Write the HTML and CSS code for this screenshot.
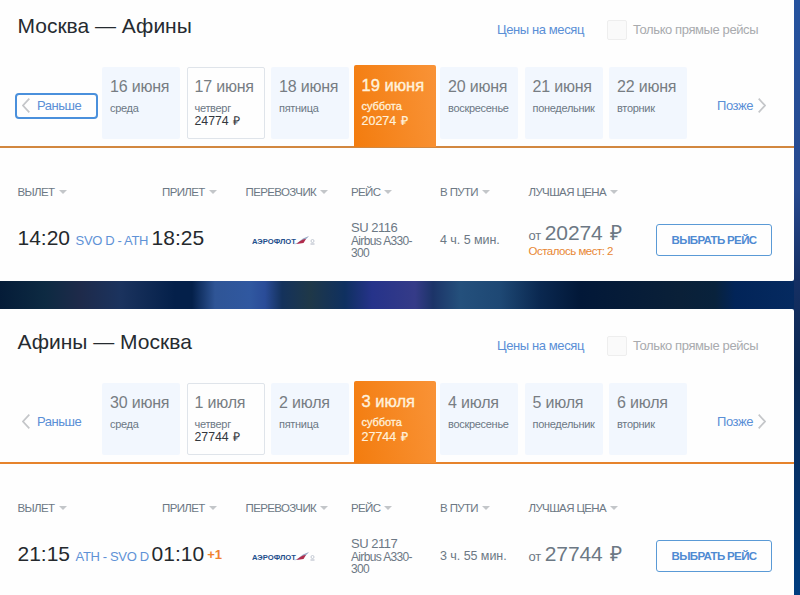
FILE: index.html
```html
<!DOCTYPE html>
<html lang="ru">
<head>
    <meta charset="UTF-8">
    <title>Выбор рейса</title>
    <link rel="stylesheet" href="styles.css">
</head>
<body>

<!-- логотип перевозчика -->
<svg width="0" height="0" class="sprite">
    <symbol id="aeroflot" viewBox="0 0 64 12">
        <text x="0" y="8.6" class="logo-text" textLength="44" lengthAdjust="spacingAndGlyphs">АЭРОФЛОТ</text>
        <path d="M42 9.300 C48 8.500 53 6 57 1 L51 3.600 L46 7.500 Z" fill="#97a5c2"/>
        <path d="M44.500 9 C47 6.500 50 4.300 54 4 L51.500 8 Z" fill="#b02c4c"/>
        <circle cx="60.500" cy="6" r="1.500" fill="none" stroke="#c3c9d3" stroke-width="1"/>
        <path d="M58.500 9 h4" stroke="#c8cdd6" stroke-width="1.500"/>
    </symbol>
</svg>

<section class="card">
    <header class="card-header">
        <h2>Москва — Афины</h2>
        <a class="month-link">Цены на месяц</a>
        <label class="direct"><span class="checkbox"></span>Только прямые рейсы</label>
    </header>

    <div class="dates">
        <a class="earlier focused"><svg class="arrow" viewBox="0 0 8 15"><path d="M7.300 0.700 L1 7.500 L7.300 14.300"/></svg>Раньше</a>
        <div class="days">
            <div class="day"><b>16 июня</b><span>среда</span></div>
            <div class="day priced"><b>17 июня</b><span>четверг</span><em>24774 ₽</em></div>
            <div class="day"><b>18 июня</b><span>пятница</span></div>
            <div class="day active"><b>19 июня</b><span>суббота</span><em>20274 ₽</em></div>
            <div class="day"><b>20 июня</b><span>воскресенье</span></div>
            <div class="day"><b>21 июня</b><span>понедельник</span></div>
            <div class="day"><b>22 июня</b><span>вторник</span></div>
        </div>
        <a class="later">Позже<svg class="arrow" viewBox="0 0 8 15"><path d="M0.700 0.700 L7 7.500 L0.700 14.300"/></svg></a>
    </div>

    <div class="row head">
        <span class="sort">ВЫЛЕТ</span>
        <span class="sort">ПРИЛЕТ</span>
        <span class="sort">ПЕРЕВОЗЧИК</span>
        <span class="sort">РЕЙС</span>
        <span class="sort">В ПУТИ</span>
        <span class="sort">ЛУЧШАЯ ЦЕНА</span>
    </div>
    <div class="row flight">
        <div class="times">
            <span class="time">14:20</span>
            <span class="route">SVO D - ATH</span>
            <span class="time">18:25</span>
        </div>
        <svg class="logo"><use href="#aeroflot"/></svg>
        <div class="plane"><span class="number">SU 2116</span><br>Airbus A330-300</div>
        <div class="duration">4 ч. 5 мин.</div>
        <div class="price">
            <div class="sum">от <strong>20274 ₽</strong></div>
            <div class="seats">Осталось мест: 2</div>
        </div>
        <button class="choose">ВЫБРАТЬ РЕЙС</button>
    </div>
</section>

<section class="card">
    <header class="card-header">
        <h2>Афины — Москва</h2>
        <a class="month-link">Цены на месяц</a>
        <label class="direct"><span class="checkbox"></span>Только прямые рейсы</label>
    </header>

    <div class="dates">
        <a class="earlier"><svg class="arrow" viewBox="0 0 8 15"><path d="M7.300 0.700 L1 7.500 L7.300 14.300"/></svg>Раньше</a>
        <div class="days">
            <div class="day"><b>30 июня</b><span>среда</span></div>
            <div class="day priced"><b>1 июля</b><span>четверг</span><em>27744 ₽</em></div>
            <div class="day"><b>2 июля</b><span>пятница</span></div>
            <div class="day active"><b>3 июля</b><span>суббота</span><em>27744 ₽</em></div>
            <div class="day"><b>4 июля</b><span>воскресенье</span></div>
            <div class="day"><b>5 июля</b><span>понедельник</span></div>
            <div class="day"><b>6 июля</b><span>вторник</span></div>
        </div>
        <a class="later">Позже<svg class="arrow" viewBox="0 0 8 15"><path d="M0.700 0.700 L7 7.500 L0.700 14.300"/></svg></a>
    </div>

    <div class="row head">
        <span class="sort">ВЫЛЕТ</span>
        <span class="sort">ПРИЛЕТ</span>
        <span class="sort">ПЕРЕВОЗЧИК</span>
        <span class="sort">РЕЙС</span>
        <span class="sort">В ПУТИ</span>
        <span class="sort">ЛУЧШАЯ ЦЕНА</span>
    </div>
    <div class="row flight">
        <div class="times">
            <span class="time">21:15</span>
            <span class="route">ATH - SVO D</span>
            <span class="time">01:10</span>
            <span class="plus">+1</span>
        </div>
        <svg class="logo"><use href="#aeroflot"/></svg>
        <div class="plane"><span class="number">SU 2117</span><br>Airbus A330-300</div>
        <div class="duration">3 ч. 55 мин.</div>
        <div class="price">
            <div class="sum">от <strong>27744 ₽</strong></div>
        </div>
        <button class="choose">ВЫБРАТЬ РЕЙС</button>
    </div>
</section>

</body>
</html>
```
FILE: styles.css
```css
* {
    box-sizing: border-box;
}
body {
    margin: 0;
    height: 595px;
    overflow: hidden;
    font-family: "Liberation Sans", Arial, sans-serif;
    font-size: 13px;
    color: #6c7884;
    background:
        linear-gradient(#25539f 0, #27498f 190px, #152f63 280px, #0b2852 370px, #003d80 595px) right / 6px 100% no-repeat,
        linear-gradient(90deg, #051c38 0, #0d2a42 45px, #1e2a4a 80px, #1b335e 120px, #04204a 175px, #04204a 192px, #2f5596 215px, #3058a0 250px, #2a4c98 265px, #14325c 282px, #1f3848 310px, #0f3060 345px, #26338a 372px, #353b88 415px, #1c3468 433px, #24507c 460px, #1e4874 500px, #0a2850 540px, #021838 580px, #0a2038 680px, #08223c 715px, #022458 735px, #052a60 794px);
}
.sprite {
    position: absolute;
}

.card {
    width: 794px;
    height: 281px;
    background: #fefefe;
    border-radius: 0 0 2px 0;
}
.card + .card {
    height: 286px;
    margin-top: 28px;
    padding-top: 7px;
    border-radius: 0 2px 0 0;
}

.card-header {
    display: flex;
    align-items: center;
    height: 59px;
    padding-left: 17.500px;
}
.card-header h2 {
    width: 479.500px;
    margin: 0;
    padding-bottom: 8px;
    font-size: 21px;
    font-weight: normal;
    line-height: 24px;
    color: #262b30;
}
.month-link {
    width: 110px;
    letter-spacing: -0.400px;
    color: #5a8fd6;
}
.direct {
    display: flex;
    align-items: center;
    gap: 6px;
    letter-spacing: -0.400px;
    color: #a9abae;
}
.checkbox {
    width: 20px;
    height: 20px;
    border: 1px solid #eeeeee;
    border-radius: 2px;
    background: #fafafa;
}

/* лента с датами */
.dates {
    display: flex;
    height: 89px;
    padding-top: 8px;
    border-bottom: 2px solid #d2873f;
}
.card + .card .dates {
    border-color: #e6832c;
}
.earlier,
.later {
    display: flex;
    align-items: center;
    height: 26px;
    margin-top: 25.500px;
    letter-spacing: -0.450px;
    color: #5a8fd6;
}
.earlier {
    width: 82.500px;
    margin-left: 15px;
    margin-right: 4.500px;
    padding-left: 6px;
    gap: 7px;
    border: 1px solid transparent;
    border-radius: 4px;
}
.focused {
    border: 2px solid #4a90dc;
    padding-left: 5px;
}
.later {
    margin-left: 30px;
    gap: 5px;
}
.arrow {
    width: 8px;
    height: 15px;
    fill: none;
    stroke: #c4c6c9;
    stroke-width: 1.700;
}
.days {
    display: grid;
    grid-template-columns: repeat(7, 78px);
    gap: 6.500px;
}
.day {
    display: flex;
    flex-direction: column;
    height: 72px;
    padding: 11px 0 0 8px;
    border-radius: 2px;
    background: #f2f7fe;
    line-height: 13px;
}
.day b {
    font-size: 16px;
    font-weight: normal;
    line-height: 18px;
    letter-spacing: -0.200px;
    margin-bottom: 5px;
    color: #777d83;
    white-space: nowrap;
}
.day span {
    font-size: 11px;
    letter-spacing: -0.300px;
    line-height: 14px;
}
.day em {
    font-style: normal;
    font-size: 12.300px;
    word-spacing: 1px;
    color: #33383d;
}
.priced {
    padding: 10px 0 0 7px;
    border: 1px solid #dfe4ea;
    background: #fefefe;
}
.active {
    height: 82.500px;
    margin: -2.500px -2.500px 0 -2px;
    background: linear-gradient(80deg, #f37c0e, #f99337);
    border-radius: 2px 2px 0 0;
}
.day.active b,
.day.active span,
.day.active em {
    color: #fff1dc;
}
.day.active b {
    font-size: 16.500px;
    letter-spacing: 0;
    -webkit-text-stroke: 0.400px #fff1dc;
}
.day.active span {
    letter-spacing: -0.050px;
    line-height: 15px;
    -webkit-text-stroke: 0.300px #fff1dc;
}
.day.active em {
    margin-top: 1px;
    font-size: 12.500px;
    -webkit-text-stroke: 0.200px #fff1dc;
}

/* таблица рейсов */
.row {
    display: grid;
    padding-left: 17.500px;
}
.head {
    grid-template-columns: 144.500px 83.500px 105.500px 89px 88.500px 1fr;
    margin-top: 36px;
    height: 16px;
    line-height: 16px;
    font-size: 11.500px;
    letter-spacing: -0.620px;
}
.sort::after {
    content: "";
    display: inline-block;
    margin-left: 4px;
    vertical-align: 2px;
    border: 4px solid transparent;
    border-top-color: #c3c6c9;
    border-bottom: 0;
}
.flight {
    grid-template-columns: 234.500px 99px 89px 88.500px 127.500px 116px;
    align-items: center;
    height: 80px;
}
.times {
    display: flex;
    align-items: baseline;
    margin-top: -4px;
    white-space: nowrap;
}
.time {
    font-size: 21px;
    color: #25292d;
}
.route {
    width: 81.500px;
    padding-left: 5.500px;
    letter-spacing: -0.350px;
    color: #5f92d6;
}
.plus {
    align-self: center;
    margin-left: 3px;
    font-weight: bold;
    font-size: 13px;
    color: #f08030;
}
.logo {
    width: 64px;
    height: 12px;
    margin-top: 2px;
}
.logo-text {
    font: bold 6.500px "Liberation Sans", Arial, sans-serif;
    fill: #1f4f8c;
}
.plane {
    width: 70px;
    margin-top: 2px;
    font-size: 12px;
    letter-spacing: -0.650px;
    line-height: 12.500px;
}
.number {
    font-size: 13px;
    letter-spacing: -0.500px;
}
.duration {
    font-size: 12.500px;
    letter-spacing: -0.050px;
}
.price {
    margin-top: -2px;
}
.sum {
    line-height: 22px;
    letter-spacing: -0.100px;
}
.sum strong {
    font-weight: normal;
    font-size: 21px;
    word-spacing: 2px;
}
.seats {
    margin-top: -2px;
    font-size: 11.500px;
    letter-spacing: -0.500px;
    line-height: 12px;
    color: #e88734;
}
.choose {
    width: 116px;
    height: 32px;
    padding: 0;
    border: 1px solid #5a9ad6;
    border-radius: 3px;
    background: #fefefe;
    font: bold 11.500px "Liberation Sans", Arial, sans-serif;
    letter-spacing: -0.650px;
    color: #4f8ad2;
}
```
